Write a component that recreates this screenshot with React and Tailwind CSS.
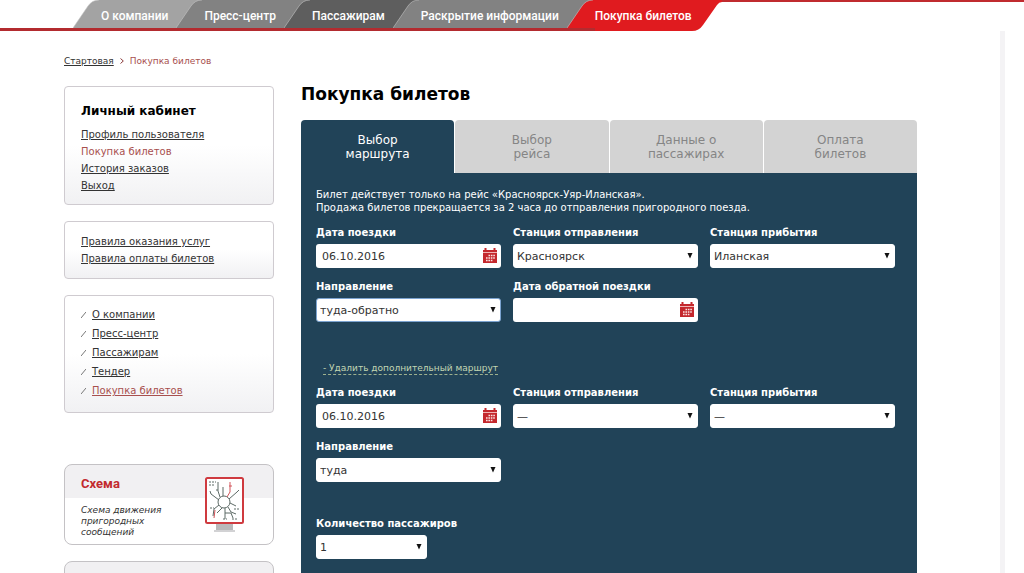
import { useState } from "react";

const menu = [
  { name: "О компании", body: "bg-[#a3a3a3]", fill: "#a3a3a3", prev: "none" },
  { name: "Пресс-центр", body: "bg-[#828282]", fill: "#828282", prev: "#a3a3a3" },
  { name: "Пассажирам", body: "bg-[#5e5e5e]", fill: "#5e5e5e", prev: "#828282" },
  { name: "Раскрытие информации", body: "bg-[#828282]", fill: "#828282", prev: "#5e5e5e" },
];

const steps = ["Выбор\nмаршрута", "Выбор\nрейса", "Данные о\nпассажирах", "Оплата\nбилетов"];

const accountLinks = ["Профиль пользователя", "Покупка билетов", "История заказов", "Выход"];
const ruleLinks = ["Правила оказания услуг", "Правила оплаты билетов"];
const sectionLinks = ["О компании", "Пресс-центр", "Пассажирам", "Тендер", "Покупка билетов"];

const stations = ["—", "Красноярск", "Уяр", "Иланская"];
const directions = ["туда", "туда-обратно"];

// slanted left side of a menu tab, drawn over the colour of the previous one
const Slant = ({ fill, prev }) => (
  <svg className="h-7 w-7 shrink-0" viewBox="0 0 28 28" aria-hidden="true">
    <rect width="28" height="28" fill={prev} />
    <path d="M0 28 L15 6 Q19 0 26 0 H28 V28 Z" fill={fill} />
    <path d="M0 28 L15 6 Q19 0 26 0" fill="none" stroke="#c4c4c4" strokeWidth="0.6" />
  </svg>
);

const Header = () => (
  <header className="flex h-[31px] font-['Roboto',sans-serif] text-[12px] font-medium text-white">
    <nav className="flex border-b-3 border-[#b32b2f] pl-[73px]">
      {menu.map((item) => (
        <a key={item.name} href="#" className="flex whitespace-nowrap">
          <Slant fill={item.fill} prev={item.prev} />
          <span className={`${item.body} flex items-center pr-2 pt-[3px]`}>{item.name}</span>
        </a>
      ))}
      <div className="bg-[#828282]">
        <Slant fill="#e01b1f" prev="#828282" />
      </div>
    </nav>
    <a href="#" className="flex whitespace-nowrap">
      <span className="flex items-center bg-[#e01b1f]">Покупка билетов</span>
      <svg className="h-[31px] w-[30px]" viewBox="0 0 30 31" aria-hidden="true">
        <path d="M0 0 H30 V2 Q27 2 25 5 L11 25 Q7 31 0 31 Z" fill="#e01b1f" />
      </svg>
    </a>
    <div className="h-[2px] flex-1 bg-[#c02b2f]" />
  </header>
);

const CalendarIcon = () => (
  <svg className="h-4 w-3.5" viewBox="0 0 14 16" aria-hidden="true">
    <path d="M0 2 H14 V15 H0 Z" fill="#c4282d" />
    <path d="M2.5 0 V3 M11.5 0 V3" stroke="#c4282d" strokeWidth="2" />
    <path d="M0 4.5 H14" stroke="#f0b4b4" strokeWidth="1" />
    <path
      d="M5.5 7.5 H12 M3 10 H12 M3 12.5 H9.5"
      stroke="#fbe3e3"
      strokeWidth="1.6"
      strokeDasharray="1.6 0.8"
    />
  </svg>
);

const DateField = ({ id, label, initial }) => {
  const [value, setValue] = useState(initial);

  return (
    <div>
      <label htmlFor={id} className="block pb-[5px] font-bold">{label}</label>
      <div className="flex h-6 items-center rounded-[3px] bg-white pr-1">
        <input
          id={id}
          type="text"
          value={value}
          onChange={(e) => setValue(e.target.value)}
          className="min-w-0 flex-1 bg-transparent pl-1.5 text-[11px] text-[#333] outline-none"
        />
        <button type="button" aria-label="Открыть календарь">
          <CalendarIcon />
        </button>
      </div>
    </div>
  );
};

const SelectField = ({ id, label, options, initial, className, focused }) => {
  const [value, setValue] = useState(initial);

  return (
    <div className={className}>
      <label htmlFor={id} className="block pb-[5px] font-bold">{label}</label>
      <div className="relative">
        <select
          id={id}
          value={value}
          onChange={(e) => setValue(e.target.value)}
          className={`block h-6 w-full appearance-none rounded-[3px] border bg-white pl-[3px] text-[11px] text-[#333] outline-none ${
            focused ? "border-[#7ba3d0]" : "border-white"
          }`}
        >
          {options.map((o) => (
            <option key={o}>{o}</option>
          ))}
        </select>
        <svg className="pointer-events-none absolute right-[5px] top-[9px] h-[6px] w-[6px]" viewBox="0 0 6 6" aria-hidden="true">
          <path d="M0.5 0 H5.5 L3 5.5 Z" fill="#111" />
        </svg>
      </div>
    </div>
  );
};

const Box = ({ children, className }) => (
  <div className={`rounded-[4px] border border-[#cfcbd0] bg-linear-to-b from-white from-50% to-[#f1f1f3] px-4 ${className}`}>
    {children}
  </div>
);

const SchemeIcon = () => (
  <svg className="h-14 w-10" viewBox="0 0 40 56" aria-hidden="true">
    <rect x="11" y="46" width="17" height="9" fill="#b9b9bb" />
    <rect x="9" y="53" width="21" height="2" fill="#d2d2d4" />
    <rect x="1" y="1" width="37" height="45" rx="1.5" fill="#fff" stroke="#cf3a3f" strokeWidth="2" />
    <g fill="none" stroke="#5d6a66" strokeWidth="1">
      <circle cx="19" cy="25" r="6" />
      <path d="M15 20 L13 14 V5 M18 19 V10 M14 23 L6 17 L5 14 M14 28 L9 32 L8 39 M17 31 L12 36 M20 31 V42 M23 30 L26 35 L31 37 M25 26 L31 29 M24 22 L32 15 M32 15 L34 13 M20 36 H26 L28 41" />
      <path d="M4 5 H11 M4 8 H9 M11 13 H14 M5 31 H9 M29 32 H34 M18 42 H22 M27 42 H32" strokeDasharray="2 1" />
    </g>
    <path d="M22 20 L25 15 V5 M24 9 H27 M10 33 L9 41" fill="none" stroke="#d2555a" strokeWidth="1" />
  </svg>
);

const LinkList = ({ items }) => (
  <ul className="leading-[17px]">
    {items.map((item) => (
      <li key={item}>
        <a href="#" className={item === "Покупка билетов" ? "text-[#a8504e]" : "underline underline-offset-1"}>
          {item}
        </a>
      </li>
    ))}
  </ul>
);

const Sidebar = () => (
  <aside className="w-[210px] shrink-0 text-[10px] text-[#333]">
    <Box className="pt-4 pb-[10px]">
      <h2 className="pb-[7px] text-[12px] leading-4 font-bold text-black">Личный кабинет</h2>
      <LinkList items={accountLinks} />
    </Box>
    <Box className="mt-4 py-[11px]">
      <LinkList items={ruleLinks} />
    </Box>
    <Box className="mt-4 pt-[9px] pb-[12px]">
      <ul className="leading-[19px]">
        {sectionLinks.map((item) => (
          <li key={item} className="flex items-center">
            <svg className="mr-1.5 h-1.5 w-[5px]" viewBox="0 0 5 6" aria-hidden="true">
              <path d="M0 6 L5 0" stroke="#777" strokeWidth="1" />
            </svg>
            <a href="#" className={`underline underline-offset-1 ${item === "Покупка билетов" ? "text-[#a8504e]" : ""}`}>
              {item}
            </a>
          </li>
        ))}
      </ul>
    </Box>
    <a href="#" className="mt-[51px] flex justify-between rounded-lg border border-[#c4c2c5] bg-linear-to-b from-[#f1f0f2] from-42% to-white to-42% pt-3 pr-7 pb-1.5 pl-4">
      <span>
        <span className="block font-['Roboto',sans-serif] text-[13px] leading-[13px] font-bold text-[#c22a2e]">Схема</span>
        <span className="mt-[15px] block w-24 text-[9px] leading-[11px] italic">Схема движения пригородных сообщений</span>
      </span>
      <SchemeIcon />
    </a>
    <div className="mt-4 h-20 rounded-lg border border-[#c4c2c5] bg-[#f1f0f2]" />
  </aside>
);

const App = () => {
  const [step, setStep] = useState(0);

  return (
    <div className="h-screen overflow-hidden bg-white font-['Verdana','DejaVu_Sans',sans-serif]">
      <Header />
      <div className="mr-[19px] min-h-full border-r-5 border-[#f4f3f5] pl-16">
        <div className="flex items-center pt-6 text-[9px] leading-3">
          <a href="#" className="text-[#333] underline underline-offset-1">Стартовая</a>
          <svg className="mx-1.5 h-1.5 w-1" viewBox="0 0 4 6" aria-hidden="true">
            <path d="M0.5 0.5 L3.3 3 L0.5 5.5" fill="none" stroke="#8a3a3a" strokeWidth="1" />
          </svg>
          <span className="text-[#a8504e]">Покупка билетов</span>
        </div>
        <div className="flex gap-[27px] pt-[19px] pr-[83px]">
          <Sidebar />
          <main className="min-w-0 flex-1">
            <h1 className="text-[17px] leading-4 font-bold text-black">Покупка билетов</h1>
            <div className="mt-[18px] flex gap-px">
              {steps.map((name, i) => (
                <button
                  key={name}
                  type="button"
                  onClick={() => setStep(i)}
                  className={`flex h-[53px] flex-1 items-center justify-center rounded-t-[4px] text-[12px] leading-[14px] whitespace-pre-line ${
                    i === step ? "bg-[#214358] text-white" : "bg-[#d3d3d3] text-[#858585]"
                  }`}
                >
                  {name}
                </button>
              ))}
            </div>
            <form className="bg-[#214358] pt-[15px] pr-[22px] pb-10 pl-[15px] text-[10px] leading-[13px] text-white">
              <p>
                Билет действует только на рейс «Красноярск-Уяр-Иланская».
                <br />
                Продажа билетов прекращается за 2 часа до отправления пригородного поезда.
              </p>
              <div className="mt-3 grid grid-cols-3 gap-x-3 gap-y-3">
                <DateField id="date1" label="Дата поездки" initial="06.10.2016" />
                <SelectField id="from1" label="Станция отправления" options={stations} initial="Красноярск" />
                <SelectField id="to1" label="Станция прибытия" options={stations} initial="Иланская" />
                <SelectField id="direction1" label="Направление" options={directions} initial="туда-обратно" focused />
                <DateField id="back1" label="Дата обратной поездки" initial="" />
              </div>
              <button type="button" className="mt-10 ml-[7px] block border-b border-dashed border-[#9db18e] text-[9px] leading-3 text-[#c3d6b3]">
                - Удалить дополнительный маршрут
              </button>
              <div className="mt-[11px] grid grid-cols-3 gap-x-3 gap-y-3">
                <DateField id="date2" label="Дата поездки" initial="06.10.2016" />
                <SelectField id="from2" label="Станция отправления" options={stations} initial="—" />
                <SelectField id="to2" label="Станция прибытия" options={stations} initial="—" />
                <SelectField id="direction2" label="Направление" options={directions} initial="туда" />
              </div>
              <SelectField
                id="passengers"
                label="Количество пассажиров"
                options={["1", "2", "3", "4", "5"]}
                initial="1"
                className="mt-[35px] w-[111px] whitespace-nowrap"
              />
            </form>
          </main>
        </div>
      </div>
    </div>
  );
};

export default App;
